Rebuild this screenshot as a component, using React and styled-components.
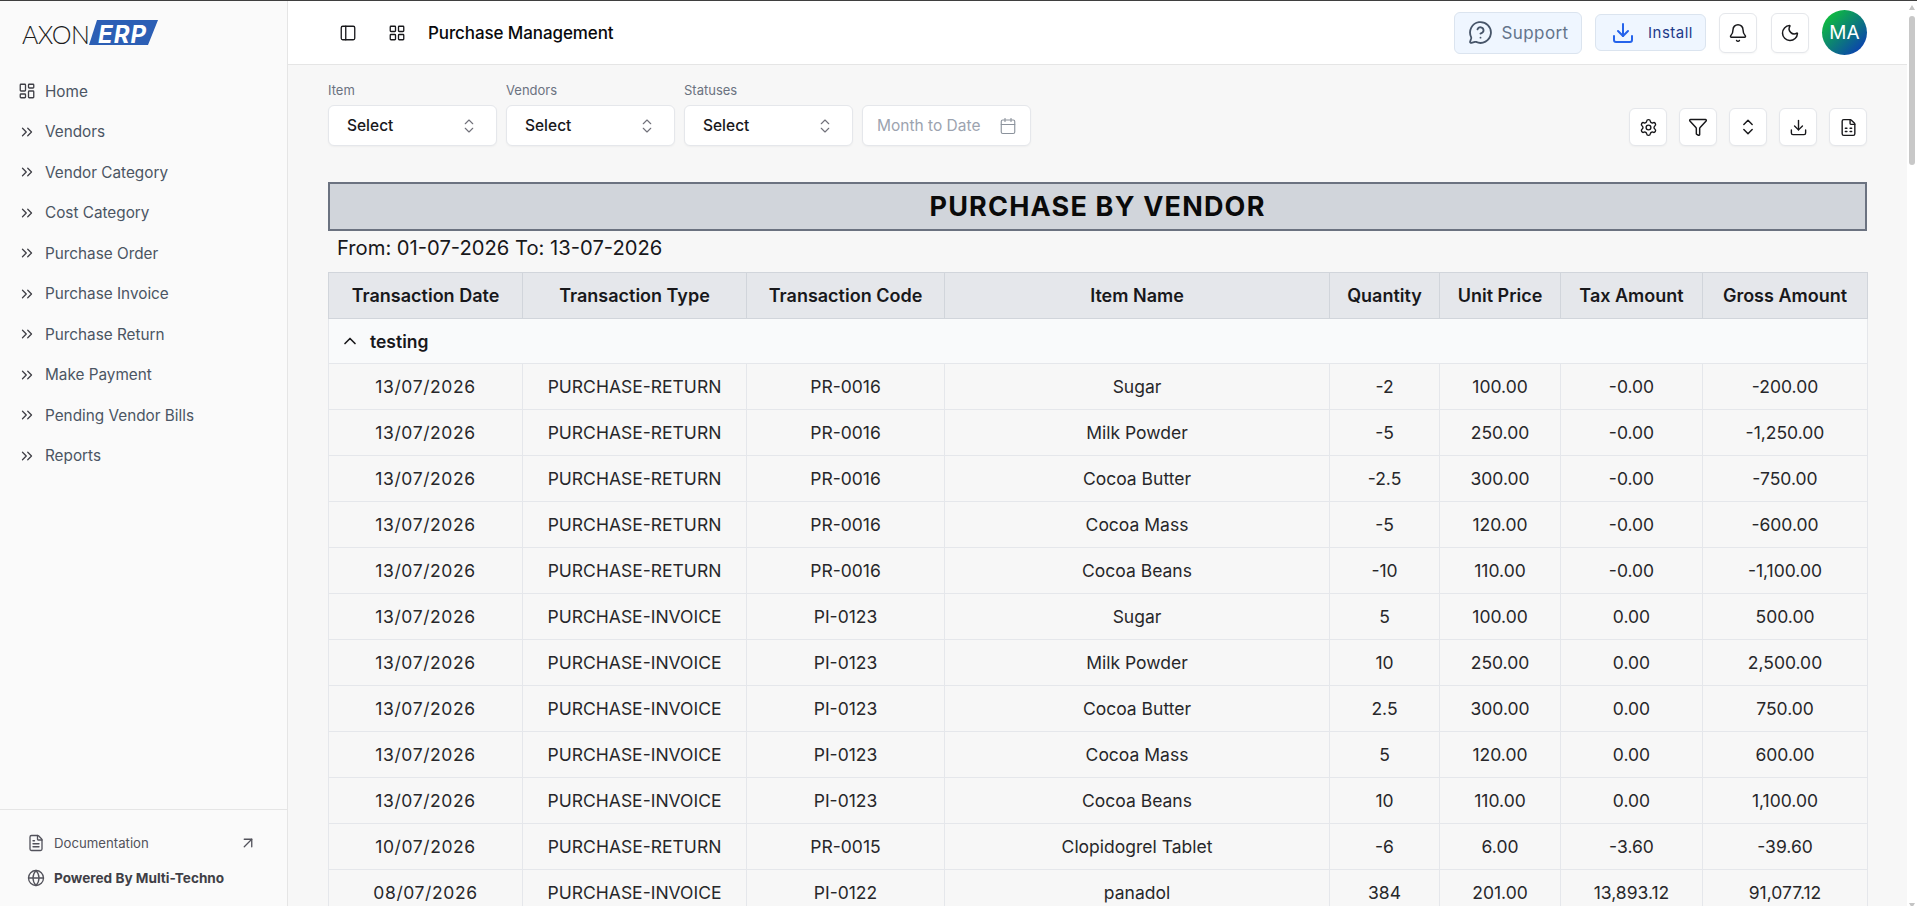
import React from "react";
import styled, { createGlobalStyle } from "styled-components";
import {
  ArrowUpRight,
  Bell,
  Calendar,
  ChevronUp,
  ChevronsRight,
  ChevronsUpDown,
  Download,
  FileSpreadsheet,
  FileText,
  Filter,
  Globe,
  LayoutDashboard,
  LayoutGrid,
  MessageCircleQuestion,
  Moon,
  PanelLeft,
  Settings,
} from "lucide-react";

const font = `Inter, "Noto Sans", "Liberation Sans", sans-serif`;

const Global = createGlobalStyle`
  html, body {
    margin: 0;
    height: 100%;
    overflow: hidden;
    background: #f7f7f7;
    font-family: ${font};
  }
  * { box-sizing: border-box; }
`;

const Shell = styled.div`
  display: flex;
  height: 100vh;
  overflow: hidden;
  border-top: 1px solid #3f3f3f;
`;

const Side = styled.aside`
  width: 288px;
  flex: none;
  display: flex;
  flex-direction: column;
  background: #fafafa;
  border-right: 1px solid #e5e5e5;
`;

const Logo = styled.svg`
  display: block;
  margin: 19px 0 0 22px;
  flex: none;
`;

const Nav = styled.nav`
  display: flex;
  flex-direction: column;
  margin-top: 17px;
  flex: 1;
`;

const NavItem = styled.a`
  height: 40.5px;
  display: flex;
  align-items: center;
  gap: 9px;
  padding-left: 18px;
  font-size: 15.3px;
  color: #4b5563;

  svg { flex: none; color: #3f3f46; }
`;

const SideFoot = styled.div`
  border-top: 1px solid #e5e5e5;
  height: 97px;
  padding: 23px 30px 0 27px;
  display: flex;
  flex-direction: column;
  gap: 15px;
`;

const FootRow = styled.div`
  display: flex;
  align-items: center;
  gap: 9px;
  height: 20px;
  font-size: ${(p) => (p.$bold ? 13.6 : 13.2)}px;
  font-weight: ${(p) => (p.$bold ? 700 : 400)};
  color: ${(p) => (p.$bold ? "#3f3f46" : "#52525b")};

  svg { flex: none; color: #52525b; }
  svg:last-child:not(:first-child) { margin-left: auto; }
`;

const Main = styled.main`
  flex: 1;
  min-width: 0;
  overflow: hidden;
  background: #f7f7f7;
`;

const ScrollRail = styled.div`
  width: 10px;
  flex: none;
  overflow: hidden;
  display: flex;
  flex-direction: column;
  align-items: center;
  background: #fff;
`;

const ScrollArrow = styled.div`
  flex: none;
  width: 0;
  height: 0;
  border-left: 3px solid transparent;
  border-right: 3px solid transparent;
  border-${(p) => (p.$down ? "top" : "bottom")}: 5px solid #c4c4c4;
  margin-top: ${(p) => (p.$down ? "auto" : "4px")};
  margin-bottom: ${(p) => (p.$down ? "-2px" : "0")};
`;

const ScrollThumb = styled.div`
  flex: none;
  width: 6px;
  height: 149px;
  margin-top: 6px;
  border-radius: 3px;
  background: #c8c8c8;
`;

const Top = styled.header`
  height: 64px;
  background: #fff;
  border-bottom: 1px solid #e5e5e5;
  display: flex;
  align-items: center;
  padding: 0 40px 0 51px;
`;

const TopLeft = styled.div`
  display: flex;
  align-items: center;
  gap: 31px;
  color: #18181b;
  flex: 1;
`;

const PageName = styled.span`
  font-size: 17px;
  font-weight: 500;
  letter-spacing: -0.1px;
  color: #09090b;
  margin-left: -9px;
`;

const TopRight = styled.div`
  display: flex;
  align-items: center;
`;

const Support = styled.button`
  width: 128px;
  height: 42px;
  margin-right: 13px;
  display: flex;
  align-items: center;
  justify-content: center;
  gap: 9px;
  background: #eff6ff;
  border: 1px solid #dbe4ef;
  border-radius: 6px;
  font: 400 17px ${font};
  letter-spacing: 0.4px;
  color: #64748b;

  svg { color: #475569; }
`;

const Install = styled.button`
  width: 111px;
  height: 37px;
  margin-right: 13px;
  display: flex;
  align-items: center;
  gap: 13px;
  padding: 0 0 0 15px;
  background: #eff6ff;
  border: 1px solid #dbe4ef;
  border-radius: 6px;
  font: 400 15px ${font};
  letter-spacing: 0.5px;
  color: #1e3a8a;

  svg { color: #2563eb; }
`;

const IconBtn = styled.button`
  width: 38px;
  height: ${(p) => p.$h || 38}px;
  flex: none;
  display: flex;
  align-items: center;
  justify-content: center;
  padding: 0;
  background: #fff;
  border: 1px solid #e5e7eb;
  border-radius: 6px;
  color: #18181b;
  box-shadow: 0 1px 2px rgba(0, 0, 0, 0.04);
  margin-right: ${(p) => p.$mr || 0}px;
`;

const Avatar = styled.div`
  width: 45px;
  height: 45px;
  margin-left: 13px;
  border-radius: 50%;
  background: linear-gradient(135deg, #0fd02c, #0a2fc0);
  color: #fff;
  font-size: 19px;
  display: flex;
  align-items: center;
  justify-content: center;
`;

const Content = styled.div`
  padding: 16px 40px 0;
`;

const Filters = styled.div`
  display: flex;
  align-items: flex-end;
  justify-content: space-between;
`;

const FilterGroup = styled.div`
  display: flex;
  align-items: flex-end;
  gap: 9px;
`;

const Field = styled.label`
  display: flex;
  flex-direction: column;
  gap: 6px;
  font-size: 13px;
  line-height: 18px;
  color: #6b7280;
`;

const Control = styled.div`
  width: 169px;
  height: 41px;
  display: flex;
  align-items: center;
  justify-content: space-between;
  padding: 0 ${(p) => (p.$date ? 13 : 18)}px 0 ${(p) => (p.$date ? 14 : 18)}px;
  background: #fff;
  border: 1px solid #e5e7eb;
  border-radius: 6px;
  box-shadow: 0 1px 2px rgba(0, 0, 0, 0.04);
  font-size: 15.5px;
  font-weight: ${(p) => (p.$date ? 400 : 500)};
  color: ${(p) => (p.$date ? "#9ca3af" : "#18181b")};

  svg { color: ${(p) => (p.$date ? "#8b929c" : "#71717a")}; }
`;

const Actions = styled.div`
  display: flex;
  gap: 12px;
`;

const Title = styled.h1`
  margin: 36px 0 0;
  height: 49px;
  display: flex;
  align-items: center;
  justify-content: center;
  background: #d1d5db;
  border: 2px solid #6b7280;
  font-size: 27px;
  font-weight: 700;
  letter-spacing: 1.2px;
  color: #0a0a0a;
`;

const Range = styled.div`
  margin: 0 0 0 9px;
  height: 41px;
  line-height: 34px;
  font-size: 20.2px;
  color: #18181b;
`;

const Table = styled.table`
  width: 100%;
  table-layout: fixed;
  border-collapse: collapse;
  border: 1px solid #e5e7eb;
  font-size: 17.5px;
`;

const Col = styled.col`
  width: ${(p) => p.$w}px;
`;

const Th = styled.th`
  height: 46px;
  padding: 0;
  background: #e5e7eb;
  border: 1px solid #d1d5db;
  font-size: 18px;
  font-weight: 600;
  color: #18181b;
`;

const GroupCell = styled.td`
  height: 45px;
  padding: 0 0 0 11px;
  background: #f9fafb;
  border: 1px solid #e5e7eb;
  font-weight: 600;
  color: #18181b;
`;

const GroupName = styled.div`
  display: flex;
  align-items: center;
  gap: 10px;
`;

const Td = styled.td`
  height: 46px;
  padding: 0;
  text-align: center;
  border: 1px solid #e5e7eb;
  color: #27272a;
  letter-spacing: ${(p) => (p.$date ? "0.6px" : "0")};
`;

const navItems = [
  "Vendors",
  "Vendor Category",
  "Cost Category",
  "Purchase Order",
  "Purchase Invoice",
  "Purchase Return",
  "Make Payment",
  "Pending Vendor Bills",
  "Reports",
];

const colWidths = [194, 224, 198, 385, 110, 121, 142, 165];

const headers = [
  "Transaction Date",
  "Transaction Type",
  "Transaction Code",
  "Item Name",
  "Quantity",
  "Unit Price",
  "Tax Amount",
  "Gross Amount",
];

const rows = [
  ["13/07/2026", "PURCHASE-RETURN", "PR-0016", "Sugar", "-2", "100.00", "-0.00", "-200.00"],
  ["13/07/2026", "PURCHASE-RETURN", "PR-0016", "Milk Powder", "-5", "250.00", "-0.00", "-1,250.00"],
  ["13/07/2026", "PURCHASE-RETURN", "PR-0016", "Cocoa Butter", "-2.5", "300.00", "-0.00", "-750.00"],
  ["13/07/2026", "PURCHASE-RETURN", "PR-0016", "Cocoa Mass", "-5", "120.00", "-0.00", "-600.00"],
  ["13/07/2026", "PURCHASE-RETURN", "PR-0016", "Cocoa Beans", "-10", "110.00", "-0.00", "-1,100.00"],
  ["13/07/2026", "PURCHASE-INVOICE", "PI-0123", "Sugar", "5", "100.00", "0.00", "500.00"],
  ["13/07/2026", "PURCHASE-INVOICE", "PI-0123", "Milk Powder", "10", "250.00", "0.00", "2,500.00"],
  ["13/07/2026", "PURCHASE-INVOICE", "PI-0123", "Cocoa Butter", "2.5", "300.00", "0.00", "750.00"],
  ["13/07/2026", "PURCHASE-INVOICE", "PI-0123", "Cocoa Mass", "5", "120.00", "0.00", "600.00"],
  ["13/07/2026", "PURCHASE-INVOICE", "PI-0123", "Cocoa Beans", "10", "110.00", "0.00", "1,100.00"],
  ["10/07/2026", "PURCHASE-RETURN", "PR-0015", "Clopidogrel Tablet", "-6", "6.00", "-3.60", "-39.60"],
  ["08/07/2026", "PURCHASE-INVOICE", "PI-0122", "panadol", "384", "201.00", "13,893.12", "91,077.12"],
];

function SelectField({ label }) {
  return (
    <Field>
      {label}
      <Control>
        Select
        <ChevronsUpDown size={18} strokeWidth={1.5} />
      </Control>
    </Field>
  );
}

export default function App() {
  return (
    <>
      <Global />
      <Shell>
        <Side>
          <Logo width="138" height="34" viewBox="0 0 138 34">
            <text x="0" y="23.5" fontFamily="Lato, sans-serif" fontWeight="300" fontSize="25" letterSpacing="-0.7" fill="#1c1c1c">
              AXON
            </text>
            <polygon points="75,0 136,0 126,25 67,25" fill="#2c5fb5" />
            <text x="76" y="22.5" fontFamily="Inter, sans-serif" fontWeight="700" fontStyle="italic" fontSize="24" letterSpacing="1" fill="#fff">
              ERP
            </text>
          </Logo>
          <Nav>
            <NavItem>
              <LayoutDashboard size={18} strokeWidth={1.75} />
              Home
            </NavItem>
            {navItems.map((item) => (
              <NavItem key={item}>
                <ChevronsRight size={18} strokeWidth={1.75} />
                {item}
              </NavItem>
            ))}
          </Nav>
          <SideFoot>
            <FootRow>
              <FileText size={18} strokeWidth={1.75} />
              Documentation
              <ArrowUpRight size={18} strokeWidth={1.75} />
            </FootRow>
            <FootRow $bold>
              <Globe size={18} strokeWidth={1.75} />
              Powered By Multi-Techno
            </FootRow>
          </SideFoot>
        </Side>
        <Main>
          <Top>
            <TopLeft>
              <PanelLeft size={18} strokeWidth={1.75} />
              <LayoutGrid size={18} strokeWidth={1.75} />
              <PageName>Purchase Management</PageName>
            </TopLeft>
            <TopRight>
              <Support>
                <MessageCircleQuestion size={25} strokeWidth={1.75} />
                Support
              </Support>
              <Install>
                <Download size={24} strokeWidth={2} />
                Install
              </Install>
              <IconBtn $h={40} $mr={14}>
                <Bell size={20} strokeWidth={1.75} />
              </IconBtn>
              <IconBtn $h={40}>
                <Moon size={20} strokeWidth={1.75} />
              </IconBtn>
              <Avatar>MA</Avatar>
            </TopRight>
          </Top>
          <Content>
            <Filters>
              <FilterGroup>
                <SelectField label="Item" />
                <SelectField label="Vendors" />
                <SelectField label="Statuses" />
                <Control $date>
                  Month to Date
                  <Calendar size={18} strokeWidth={1.5} />
                </Control>
              </FilterGroup>
              <Actions>
                <IconBtn><Settings size={19} strokeWidth={1.75} /></IconBtn>
                <IconBtn><Filter size={20} strokeWidth={1.75} /></IconBtn>
                <IconBtn><ChevronsUpDown size={20} strokeWidth={1.75} /></IconBtn>
                <IconBtn><Download size={19} strokeWidth={1.75} /></IconBtn>
                <IconBtn><FileSpreadsheet size={19} strokeWidth={1.75} /></IconBtn>
              </Actions>
            </Filters>
            <Title>PURCHASE BY VENDOR</Title>
            <Range>From: 01-07-2026 To: 13-07-2026</Range>
            <Table>
              <colgroup>
                {colWidths.map((w, i) => (
                  <Col key={i} $w={w} />
                ))}
              </colgroup>
              <thead>
                <tr>
                  {headers.map((h) => (
                    <Th key={h}>{h}</Th>
                  ))}
                </tr>
              </thead>
              <tbody>
                <tr>
                  <GroupCell colSpan={8}>
                    <GroupName>
                      <ChevronUp size={20} strokeWidth={2} />
                      testing
                    </GroupName>
                  </GroupCell>
                </tr>
                {rows.map((row, i) => (
                  <tr key={i}>
                    {row.map((cell, j) => (
                      <Td key={j} $date={j === 0}>{cell}</Td>
                    ))}
                  </tr>
                ))}
              </tbody>
            </Table>
          </Content>
        </Main>
        <ScrollRail>
          <ScrollArrow />
          <ScrollThumb />
          <ScrollArrow $down />
        </ScrollRail>
      </Shell>
    </>
  );
}
